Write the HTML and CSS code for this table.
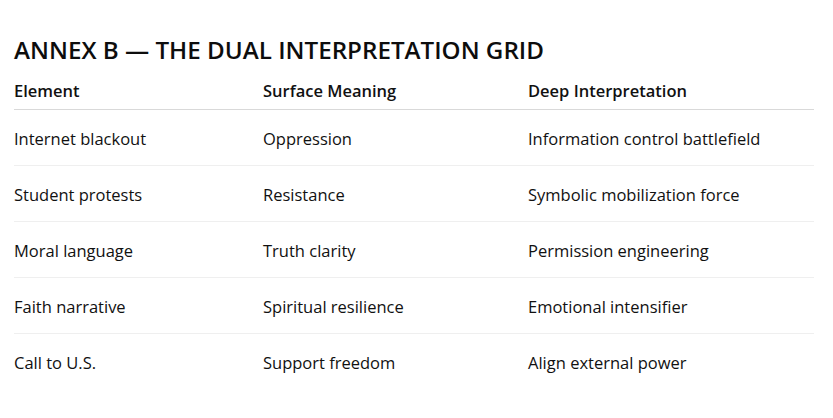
FILE: index.html
```html
<!DOCTYPE html>
<html lang="en">
<head>
<meta charset="utf-8">
<title>Annex B</title>
<link rel="stylesheet" href="styles.css">
</head>
<body>
<main class="page">
  <h2 class="title">ANNEX B — THE DUAL INTERPRETATION GRID</h2>
  <div class="grid">
    <div class="row head">
      <div class="cell">Element</div>
      <div class="cell">Surface Meaning</div>
      <div class="cell">Deep Interpretation</div>
    </div>
    <div class="row">
      <div class="cell">Internet blackout</div>
      <div class="cell">Oppression</div>
      <div class="cell">Information control battlefield</div>
    </div>
    <div class="row">
      <div class="cell">Student protests</div>
      <div class="cell">Resistance</div>
      <div class="cell">Symbolic mobilization force</div>
    </div>
    <div class="row">
      <div class="cell">Moral language</div>
      <div class="cell">Truth clarity</div>
      <div class="cell">Permission engineering</div>
    </div>
    <div class="row">
      <div class="cell">Faith narrative</div>
      <div class="cell">Spiritual resilience</div>
      <div class="cell">Emotional intensifier</div>
    </div>
    <div class="row last">
      <div class="cell">Call to U.S.</div>
      <div class="cell">Support freedom</div>
      <div class="cell">Align external power</div>
    </div>
  </div>
</main>
</body>
</html>
```
FILE: styles.css
```css
* { box-sizing: border-box; }
html, body { margin: 0; padding: 0; background: #ffffff; }
body {
  font-family: "Open Sans", "Noto Sans", sans-serif;
  color: #111111;
}
.page {
  width: 800px;
  margin-left: 14px;
  padding-top: 34px;
}
.title {
  margin: 0;
  font-size: 24.2px;
  font-weight: 600;
  line-height: 32px;
  color: #0d0d0d;
}
.row {
  display: grid;
  grid-template-columns: 249px 265px 1fr;
  height: 56px;
  padding-top: 2px;
  align-items: center;
  border-bottom: 1px solid #efefef;
  font-size: 16.5px;
  line-height: 24px;
}
.row.head {
  height: 44px;
  padding-top: 0;
  align-items: end;
  padding-bottom: 6px;
  font-weight: 600;
  border-bottom: 1px solid #d9d9d9;
}
.row.last { border-bottom: none; }
.cell { white-space: nowrap; }
```
